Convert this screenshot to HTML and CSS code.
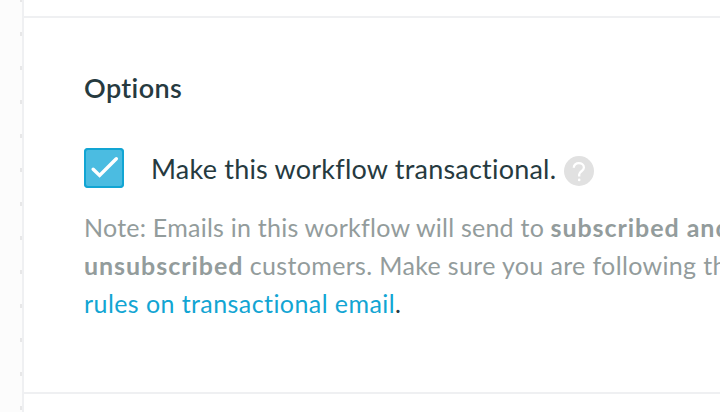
FILE: index.html
```html
<!DOCTYPE html>
<html lang="en">
<head>
<meta charset="utf-8">
<title>Workflow options</title>
<link rel="stylesheet" href="styles.css">
</head>
<body>
<div class="page">
  <aside class="canvas"></aside>
  <main class="panel">
    <section class="options">
      <h2 class="title">Options</h2>
      <div class="option">
        <span class="checkbox" role="checkbox" aria-checked="true">
          <svg width="40" height="40" viewBox="0 0 40 40"><path d="M9.2 21.3 15.6 27.4 32.3 10.8" fill="none" stroke="#fff" stroke-width="3.5" stroke-linecap="round" stroke-linejoin="miter"/></svg>
        </span>
        <span class="label">Make this workflow transactional.</span>
        <svg class="help" width="30" height="30" viewBox="0 0 30 30"><circle cx="15" cy="15" r="15" fill="#e1e1e1"/><path d="M9.8 11.7C9.8 8.8 12 7.1 14.8 7.1c2.9 0 5.1 1.7 5.1 4.3 0 3.8-4.7 3.8-4.7 7.2v1.8" fill="none" stroke="#fff" stroke-width="2.3"/><circle cx="15.2" cy="23.9" r="1.3" fill="#fff"/></svg>
      </div>
      <p class="note">
        <span class="line"><span class="first">Note: Emails in this workflow will send to</span> <b>subscribed and</b></span>
        <span class="line"><b>unsubscribed</b> <span class="second">customers. Make sure you are following the</span></span>
        <span class="line"><a class="link">rules on transactional email</a><span class="stop">.</span></span>
      </p>
    </section>
  </main>
</div>
</body>
</html>
```
FILE: styles.css
```css
* { box-sizing: border-box; }
body {
  margin: 0;
  overflow: hidden;
  background: #fff;
  color: #263a3f;
  font-family: Lato, "Open Sans", sans-serif;
}
.page {
  display: flex;
  height: 412px;
}
.canvas {
  flex: none;
  width: 24px;
  border-right: 2px solid #eff0f2;
  background: conic-gradient(from 90deg at 20px 30px, #e7e7e8 90deg, transparent 0) 0 2px / 34px 34px, #fcfcfc;
}
.panel {
  flex: 1;
  min-width: 0;
  padding-top: 16px;
}
.options {
  height: 378px;
  padding: 52px 0 0 60px;
  border-top: 2px solid #eff0f2;
  border-bottom: 2px solid #eff0f2;
  white-space: nowrap;
}
.title {
  margin: 0;
  font-size: 27px;
  line-height: 36px;
  font-weight: 600;
  letter-spacing: 0.4px;
}
.option {
  display: flex;
  align-items: center;
  height: 40px;
  margin-top: 42px;
}
.checkbox {
  width: 40px;
  height: 40px;
  border-radius: 4px;
  background: #4bbce1;
  box-shadow: inset 0 0 0 2px #12a5d3;
}
.checkbox svg { display: block; }
.label {
  width: 413px;
  margin-left: 27px;
  padding-top: 2px;
  font-size: 27px;
  line-height: 36px;
  letter-spacing: 0.21px;
}
.help {
  flex: none;
  margin-top: 6px;
}
.note {
  margin: 20px 0 0;
  color: #939c9c;
  font-size: 25px;
  line-height: 38px;
}
.line { display: block; }
.note b {
  font-weight: 700;
  letter-spacing: 0.95px;
}
.first { letter-spacing: 0.24px; }
.second { letter-spacing: 0.35px; }
.link {
  color: #12a5d3;
  letter-spacing: 0.42px;
}
.stop { color: #263a3f; }
```
